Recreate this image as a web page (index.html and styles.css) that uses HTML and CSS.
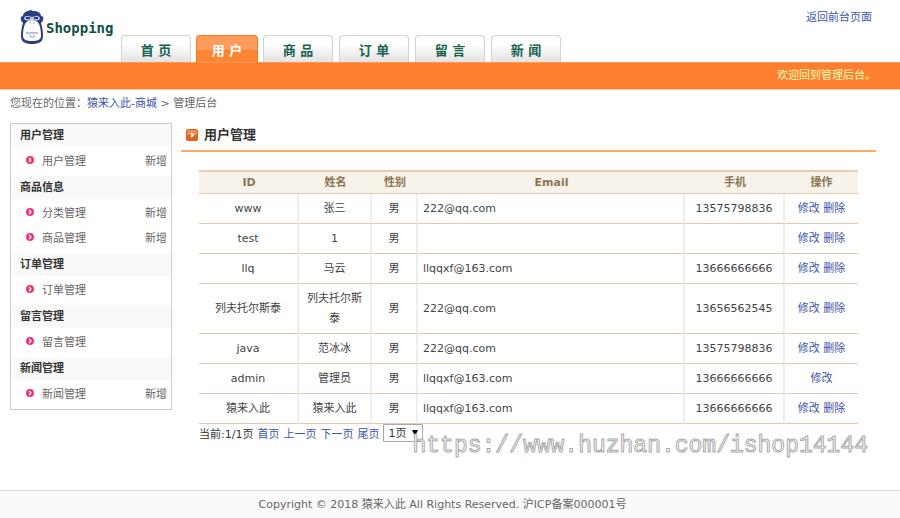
FILE: index.html
```
<!DOCTYPE html>
<html lang="zh-CN">
<head>
    <meta charset="UTF-8">
    <meta name="viewport" content="width=device-width, initial-scale=1.0">
    <title>管理后台</title>
    <link rel="stylesheet" href="styles.css">
</head>
<body>

    <!-- icons used more than once -->
    <svg class="defs" width="0" height="0">
        <symbol id="dot" viewBox="0 0 8 8">
            <circle cx="4" cy="4" r="4" fill="#f0327c"/>
            <path d="M3 2l2 2-2 2" fill="none" stroke="#fff" stroke-width="1.3"/>
        </symbol>
    </svg>

    <div id="header">
        <a class="logo" href="index.html">
            <svg width="24" height="36" viewBox="0 0 24 36">
                <path d="M11 0C6 1 3 3 3 6C1 6 0 8 1 10C1 12 3 12 3 13C2 16 1 20 1 26C1 32 5 34 12 34S23 32 23 26C23 20 22 16 21 13C21 12 23 12 23 10C24 8 23 6 21 6C21 3 18 1 13 1Z" fill="#2b3f80"/>
                <path d="M12 10C7 10 5 13 4 17C3 21 3 24 3 26C3 30 7 31 12 31S21 30 21 26C21 24 21 21 20 17C19 13 17 10 12 10Z" fill="#fff"/>
                <path d="M4 8C5 5 9 6 12 7C15 6 19 5 20 8C20 11 15 11 12 10C9 11 4 11 4 8Z" fill="#b9c3e0"/>
                <path d="M6 8h4M14 8h4" stroke="#2b3f80" stroke-width="2"/>
                <path d="M10 13h1M13 13h1M6 23h12" stroke="#7787b7"/>
                <path d="M10 25c0 3 5 3 4 0" fill="none" stroke="#7787b7"/>
            </svg>
            <span>Shopping</span>
        </a>
        <ul class="nav">
            <li><a href="#">首 页</a></li>
            <li class="current"><a href="#">用 户</a></li>
            <li><a href="#">商 品</a></li>
            <li><a href="#">订 单</a></li>
            <li><a href="#">留 言</a></li>
            <li><a href="#">新 闻</a></li>
        </ul>
        <a class="back" href="#">返回前台页面</a>
    </div>
    <div id="welcome">欢迎回到管理后台。</div>

    <div id="position">您现在的位置：<a href="#">猿来入此-商城</a> &gt; 管理后台</div>

    <div id="content">
        <div id="menu">
            <h3>用户管理</h3>
            <ul>
                <li><svg><use href="#dot"/></svg><a href="#">用户管理</a><a class="add" href="#">新增</a></li>
            </ul>
            <h3>商品信息</h3>
            <ul>
                <li><svg><use href="#dot"/></svg><a href="#">分类管理</a><a class="add" href="#">新增</a></li>
                <li><svg><use href="#dot"/></svg><a href="#">商品管理</a><a class="add" href="#">新增</a></li>
            </ul>
            <h3>订单管理</h3>
            <ul>
                <li><svg><use href="#dot"/></svg><a href="#">订单管理</a></li>
            </ul>
            <h3>留言管理</h3>
            <ul>
                <li><svg><use href="#dot"/></svg><a href="#">留言管理</a></li>
            </ul>
            <h3>新闻管理</h3>
            <ul>
                <li><svg><use href="#dot"/></svg><a href="#">新闻管理</a><a class="add" href="#">新增</a></li>
            </ul>
        </div>

        <div id="main">
            <h2>
                <svg width="12" height="12" viewBox="0 0 12 12">
                    <rect width="12" height="12" rx="2" fill="#e4611c"/>
                    <rect x="1" y="1" width="10" height="5" rx="1" fill="#f08a50"/>
                    <path d="M5 4l2 2-2 2" fill="none" stroke="#fff" stroke-width="2"/>
                </svg>
                用户管理
            </h2>

            <div class="manage">
                <table>
                    <colgroup>
                        <col class="id"><col class="name"><col class="sex"><col><col class="phone"><col class="action">
                    </colgroup>
                    <thead>
                        <tr><th>ID</th><th>姓名</th><th>性别</th><th>Email</th><th>手机</th><th>操作</th></tr>
                    </thead>
                    <tbody>
                        <tr><td>www</td><td>张三</td><td>男</td><td class="email">222@qq.com</td><td>13575798836</td><td><a href="#">修改</a> <a href="#">删除</a></td></tr>
                        <tr><td>test</td><td>1</td><td>男</td><td class="email"></td><td></td><td><a href="#">修改</a> <a href="#">删除</a></td></tr>
                        <tr><td>llq</td><td>马云</td><td>男</td><td class="email">llqqxf@163.com</td><td>13666666666</td><td><a href="#">修改</a> <a href="#">删除</a></td></tr>
                        <tr><td>列夫托尔斯泰</td><td>列夫托尔斯泰</td><td>男</td><td class="email">222@qq.com</td><td>13656562545</td><td><a href="#">修改</a> <a href="#">删除</a></td></tr>
                        <tr><td>java</td><td>范冰冰</td><td>男</td><td class="email">222@qq.com</td><td>13575798836</td><td><a href="#">修改</a> <a href="#">删除</a></td></tr>
                        <tr><td>admin</td><td>管理员</td><td>男</td><td class="email">llqqxf@163.com</td><td>13666666666</td><td><a href="#">修改</a></td></tr>
                        <tr><td>猿来入此</td><td>猿来入此</td><td>男</td><td class="email">llqqxf@163.com</td><td>13666666666</td><td><a href="#">修改</a> <a href="#">删除</a></td></tr>
                    </tbody>
                </table>

                <div class="pager">
                    <span>当前:1/1页</span>
                    <a href="#">首页</a>
                    <a href="#">上一页</a>
                    <a href="#">下一页</a>
                    <a href="#">尾页</a>
                    <span class="select">
                        <select aria-label="页码">
                            <option>1页</option>
                        </select>
                    </span>
                    <div class="watermark">https://www.huzhan.com/ishop14144</div>
                </div>
            </div>
        </div>
    </div>

    <div id="footer">Copyright © 2018 猿来入此 All Rights Reserved. 沪ICP备案000001号</div>

</body>
</html>
```
FILE: styles.css
```
* {
    box-sizing: border-box;
    margin: 0;
    padding: 0;
}

body {
    font-family: "DejaVu Sans", "Noto Sans CJK SC", sans-serif;
    font-size: 11px;
    line-height: 20px;
    color: #666;
    background-color: #fff;
}

ul {
    list-style: none;
}

a {
    color: #3d55ad;
    text-decoration: none;
}

a:hover {
    text-decoration: underline;
}

.defs {
    position: absolute;
}

/* Header */
#header {
    display: flex;
    height: 62px;
    padding: 0 28px 0 20px;
}

.logo {
    display: flex;
    width: 101px;
    padding-top: 10px;
    gap: 2px;
    font-family: "DejaVu Sans Mono", monospace;
    font-size: 14px;
    font-weight: bold;
    line-height: 36px;
    color: #10504a;
}

.nav {
    display: flex;
    align-items: flex-end;
    gap: 6px;
}

.nav a {
    display: block;
    width: 70px;
    height: 27px;
    border: 1px solid #d3d3d3;
    border-bottom: none;
    border-radius: 4px 4px 0 0;
    background: linear-gradient(#fff 30%, #e2e2e2);
    font-size: 13px;
    font-weight: bold;
    line-height: 29px;
    text-align: center;
    color: #17614f;
}

.nav .current {
    margin: 0 -1px;
}

.nav .current a {
    width: 62px;
    border-color: #f27a1c;
    background: linear-gradient(#ff9c5c 55%, #fd8634 55%);
    color: #fff;
}

.back {
    margin-left: auto;
    padding-top: 8px;
}

#welcome {
    height: 28px;
    padding-right: 24px;
    border-top: 1px solid #ff9850;
    border-bottom: 1px solid #ffc9a3;
    background-color: #ff7f30;
    line-height: 26px;
    text-align: right;
    color: #ffffb5;
}

#position {
    padding: 4px 10px 9px;
}

/* Left menu + main */
#content {
    display: flex;
    align-items: flex-start;
    gap: 9px;
    padding: 0 24px 0 10px;
}

#menu {
    width: 162px;
    border: 1px solid #ccc;
}

#menu h3 {
    padding-left: 9px;
    background-color: #f9f9f9;
    font-size: 11px;
    line-height: 23px;
    color: #333;
}

#menu ul {
    padding: 2px 4px 2px 15px;
}

#menu li {
    display: flex;
    line-height: 25px;
}

#menu li svg {
    width: 8px;
    height: 8px;
    margin: 7px 8px 0 0;
}

#menu li a {
    color: #666;
}

#menu li .add {
    margin-left: auto;
}

#main {
    flex: 1;
}

#main h2 {
    display: flex;
    align-items: center;
    gap: 6px;
    height: 29px;
    padding: 0 0 3px 5px;
    border-bottom: 2px solid #ffab66;
    font-size: 13px;
    color: #333;
}

.manage {
    padding: 18px 18px 0;
}

table {
    width: 100%;
    table-layout: fixed;
    border-collapse: separate;
    border-spacing: 0;
    border-top: 2px solid #e4cdb8;
}

.id, .phone {
    width: 100px;
}

.name, .action {
    width: 73px;
}

.sex {
    width: 46px;
}

th {
    height: 22px;
    border-bottom: 1px solid #e2c8b0;
    background-color: #f7f3ea;
    color: #8b7355;
}

td {
    height: 30px;
    padding: 5px 5px 4px;
    border-right: 2px solid #eee;
    border-bottom: 1px solid #e2c8b0;
    text-align: center;
    color: #444;
}

td:last-child {
    border-right: none;
}

td.email {
    text-align: left;
}

.pager {
    display: flex;
    position: relative;
    gap: 4px;
    line-height: 22px;
    color: #333;
}

.select {
    position: relative;
    height: 18px;
}

.select::after {
    content: "";
    position: absolute;
    top: 6px;
    right: 5px;
    border: 3px solid transparent;
    border-top: 6px solid #000;
    border-bottom: none;
    pointer-events: none;
}

.select select {
    display: block;
    width: 40px;
    height: 18px;
    padding-left: 4px;
    border: 1px solid #aaa;
    border-radius: 1px;
    appearance: none;
    background-color: #fff;
    font-family: inherit;
    font-size: 11px;
    color: #333;
}

.watermark {
    position: absolute;
    top: 8px;
    right: -10px;
    font-family: "Liberation Mono", monospace;
    font-size: 23px;
    line-height: 28px;
    color: #fff;
    -webkit-text-stroke: 1px #aaa;
    pointer-events: none;
}

#footer {
    margin-top: 44px;
    padding: 4px 15px 4px 0;
    border-top: 1px solid #ddd;
    background-color: #fafafa;
    text-align: center;
}
```
